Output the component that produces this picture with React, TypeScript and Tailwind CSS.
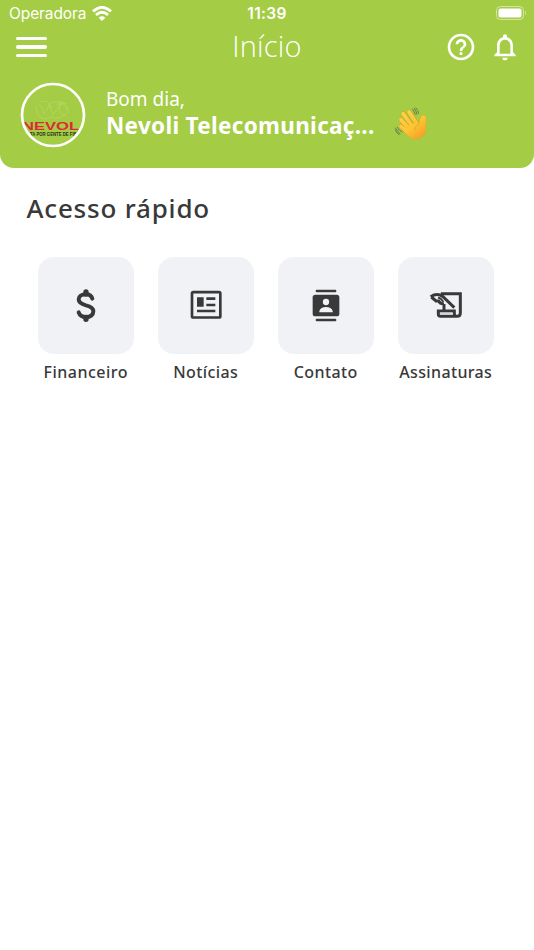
import type { ReactNode } from 'react'
import { MdHelpOutline, MdNotificationsNone } from 'react-icons/md'

function DollarIcon() {
  return (
    <svg width="20" height="33" viewBox="139 116 60 99" fill="none" stroke="#393939" strokeLinecap="round">
      <path
        d="M188 145C185 135 178 132 169 132C156 132 147 138 147 147C147 158 157 162 169 165C183 168 191 173 191 183C191 194 182 200 169 200C158 200 150 195 147 186"
        strokeWidth="12"
      />
      <path d="M169 125v6M169 201v6" strokeWidth="16" />
    </svg>
  )
}

function NewsIcon() {
  return (
    <svg width="32" height="30" viewBox="479 121 96 90" fill="#393939">
      <rect x="485" y="127.500" width="85" height="76" rx="4" fill="none" stroke="#393939" strokeWidth="8" />
      <path d="M500 143h20v28h-20zM528 143h27v8h-27zM528 162h27v8h-27zM500 180h55v8h-55z" />
    </svg>
  )
}

function ContactIcon() {
  return (
    <svg width="28" height="33" viewBox="125 116 84 99" fill="#393939">
      <rect x="136" y="118" width="62" height="8" rx="3" />
      <rect x="136" y="205" width="62" height="8" rx="3" />
      <rect x="127" y="133" width="80" height="65" rx="8" />
      <circle cx="167" cy="155" r="9.500" fill="#f1f2f6" />
      <path d="M147 186v-4c2-8 10-12 20-12s18 4 20 12v4z" fill="#f1f2f6" />
    </svg>
  )
}

function SignatureIcon() {
  return (
    <svg width="34" height="28" viewBox="477 124 102 84" fill="none" stroke="#393939" strokeWidth="9">
      <path d="M517 138v-6h54v57q0 11-10 11h-50q-6 0-6-7v-9h48v8q0 8 8 8" />
      <path d="M510 188.500h38v6h-38z" fill="#d6d7da" stroke="none" />
      <path d="M522 183v-20" />
      <path d="M482 141c12-8 26-8 37 0l34 33" />
      <path d="M484 142l14 12h8c3 6 9 9 16 8" />
      <path d="M504 144q10 2 16 13" strokeWidth="5" />
    </svg>
  )
}

function WavingHand() {
  return (
    <svg width="34" height="35" viewBox="370 80 102 105" fill="none" strokeLinecap="round">
      <defs>
        <linearGradient id="skin" x1="385" y1="95" x2="450" y2="178" gradientUnits="userSpaceOnUse">
          <stop offset="0" stopColor="#ffd54a" />
          <stop offset="0.600" stopColor="#fdc433" />
          <stop offset="1" stopColor="#f2a126" />
        </linearGradient>
      </defs>
      <g stroke="#e09a24" strokeWidth="13">
        <path d="M415 98l24 33M397 103l28 36M391 121l26 28M391 141l22 20" />
      </g>
      <path
        d="M411 140L436 128L445 133L450 114C453 104 465 107 466 114C467 124 465 133 466 146C467 163 456 178 437 179C423 180 412 172 399 155Z"
        fill="url(#skin)"
        stroke="#e9a62a"
        strokeWidth="1.500"
      />
      <g stroke="url(#skin)" strokeWidth="11">
        <path d="M415 98l26 38M397 103l32 43M391 121l30 33M391 141l27 23" />
      </g>
      <path d="M446 134c-9 3-14 9-13 18" stroke="#e09a24" strokeWidth="2" />
      <g stroke="#5f6b50" strokeWidth="2.500">
        <path d="M426 90l8 15M431 87q6 8 8 18M436 86q7 7 8 16M374 146l14 18M374 152q4 10 11 14M380 144q5 9 14 14" />
      </g>
    </svg>
  )
}

function Avatar() {
  return (
    <svg width="66" height="66" viewBox="30 20 198 198">
      <defs>
        <clipPath id="avatar">
          <circle cx="129" cy="119" r="92" />
        </clipPath>
      </defs>
      <g clipPath="url(#avatar)">
        <g fill="none" stroke="#b4d862" strokeWidth="2.500">
          <path d="M83 85q15 5 18 30q12-8 15-25q8 15 14 27q15-15 18-31M92 78h22l12 23M137 87q25-10 35 20M92 126q18 12 32-4q19 17 40-6M153 80q19 9 24 26l-14 16-16-16z" />
          <path d="M80 94q-3 26 18 35M116 88q25-18 55-2" />
        </g>
        <text x="36" y="163" textLength="171" lengthAdjust="spacingAndGlyphs" fill="#e02835" fontFamily="Liberation Sans" fontSize="35" fontWeight="700">
          NEVOL
        </text>
        <text x="60" y="182" textLength="140" lengthAdjust="spacingAndGlyphs" fill="#26331a" fontFamily="Liberation Sans" fontSize="14" fontWeight="700">
          TA POR GENTE DE FIB
        </text>
      </g>
      <circle cx="129" cy="119" r="93" fill="none" stroke="#fff" strokeWidth="8" />
    </svg>
  )
}

function StatusBar() {
  return (
    <div className="grid h-7 grid-cols-3 items-center pl-[9px] pr-[7px] text-white">
      <div className="flex items-center gap-1.5 font-['Inter'] text-[15.500px] tracking-[-0.100px]">
        Operadora
        <svg className="-mt-px" width="20" height="15" viewBox="275 16 60 45" fill="none" stroke="#fff">
          <path d="M278 32Q305 8 332 32M287 43Q305 27 323 43" strokeWidth="8.500" />
          <path d="M295 51q10-8 20 0l-10 10z" fill="#fff" stroke="none" />
        </svg>
      </div>
      <div className="-ml-0.5 text-center font-['Inter'] text-[15.500px] font-semibold tracking-[0.300px]">11:39</div>
      <svg className="-mt-0.5 justify-self-end" width="32" height="16" viewBox="0 0 32 16">
        <rect x="1.500" y="1.500" width="27" height="13" rx="4" fill="none" stroke="#fff" strokeOpacity="0.500" />
        <rect x="3.500" y="3.500" width="23" height="9" rx="2" fill="#fff" />
        <path d="M30 5.500q2 2.500 0 5z" fill="#fff" fillOpacity="0.500" />
      </svg>
    </div>
  )
}

function Shortcut({ label, spacing, children }: { label: string; spacing: string; children: ReactNode }) {
  return (
    <button className="flex flex-col items-center">
      <span className="flex h-[96.500px] w-[96.500px] items-center justify-center rounded-2xl bg-[#f1f2f6] text-[#393939]">{children}</span>
      <span className={`mt-1.5 whitespace-nowrap text-base font-medium leading-6 ${spacing}`}>{label}</span>
    </button>
  )
}

export default function App() {
  return (
    <main className="min-h-screen bg-white font-['Noto_Sans',sans-serif] text-[#393939]">
      <header className="h-[168px] rounded-b-[14px] bg-[#a4cc45] text-white">
        <StatusBar />
        <div className="grid h-[38px] grid-cols-3 items-center pl-4 pr-[13px]">
          <button className="flex w-[31px] flex-col gap-[5px]">
            <span className="h-[3.500px] rounded-full bg-white" />
            <span className="h-[3.500px] rounded-full bg-white" />
            <span className="h-[3.500px] rounded-full bg-white" />
          </button>
          <h1 className="-ml-[3px] -mt-[3px] text-center font-['Open_Sans'] text-[29px] font-light leading-9 tracking-[0.200px]">Início</h1>
          <div className="-mt-px flex items-center justify-end gap-3">
            <MdHelpOutline size={32} />
            <MdNotificationsNone size={32} />
          </div>
        </div>
        <div className="flex items-center pl-5 pt-4">
          <Avatar />
          <div className="-mt-[5px] ml-5 w-[288px]">
            <p className="text-[19px] leading-[26px]">Bom dia,</p>
            <p className="whitespace-nowrap text-[22.500px] font-bold leading-[27px] tracking-[0.300px]">Nevoli Telecomunicaç...</p>
          </div>
          <div className="mt-[17px]">
            <WavingHand />
          </div>
        </div>
      </header>

      <h2 className="ml-[26.500px] mt-[22px] text-[26px] font-medium leading-9 tracking-[0.800px]">Acesso rápido</h2>
      <div className="ml-[37.500px] mt-[31px] grid w-[456.500px] grid-cols-[96.500px_96.500px_96.500px_96.500px] justify-between">
        <Shortcut label="Financeiro" spacing="tracking-[0.500px]">
          <DollarIcon />
        </Shortcut>
        <Shortcut label="Notícias" spacing="tracking-[0.400px]">
          <NewsIcon />
        </Shortcut>
        <Shortcut label="Contato" spacing="tracking-[0.400px]">
          <ContactIcon />
        </Shortcut>
        <Shortcut label="Assinaturas" spacing="tracking-[0.350px]">
          <SignatureIcon />
        </Shortcut>
      </div>
    </main>
  )
}
